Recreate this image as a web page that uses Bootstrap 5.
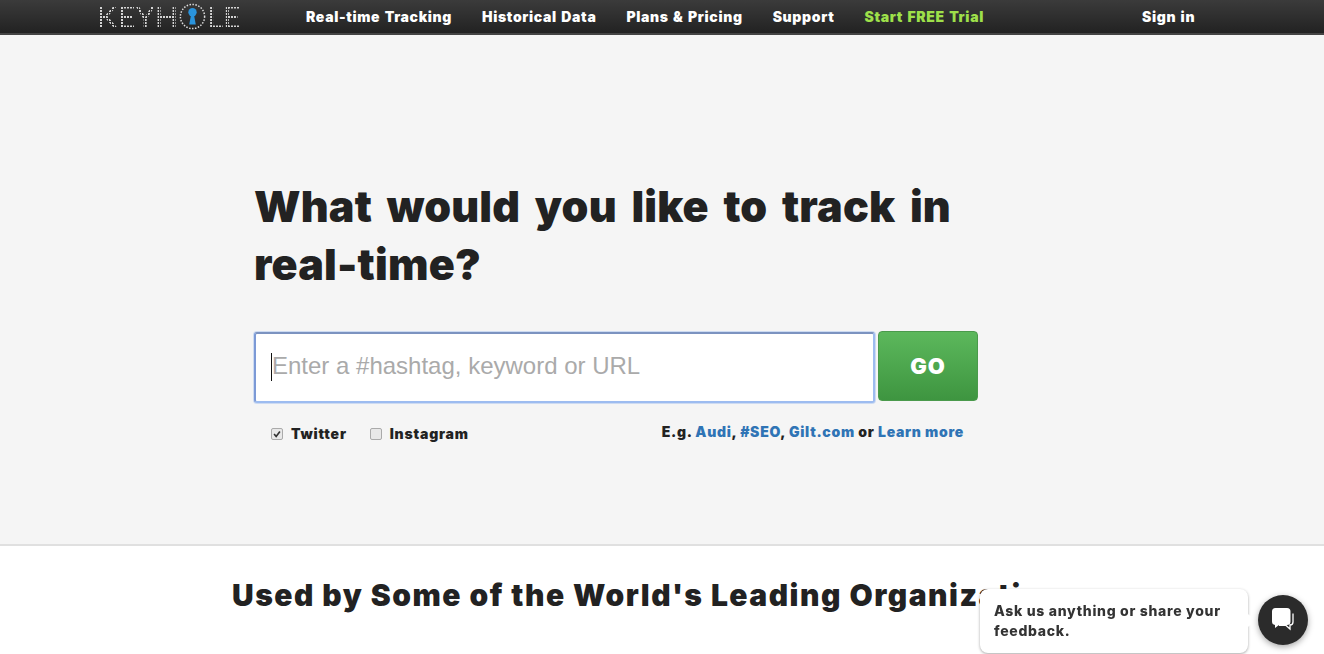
<!DOCTYPE html>
<html lang="en">
<head>
    <meta charset="UTF-8">
    <meta name="viewport" content="width=device-width, initial-scale=1.0">
    <title>Keyhole</title>
    <link href="https://cdn.jsdelivr.net/npm/bootstrap@5.3.0/dist/css/bootstrap.min.css" rel="stylesheet">
    <style>
        html, body { height: 100%; }
        body {
            font-family: Inter, "Liberation Sans", sans-serif;
            font-weight: 900;
            color: #222;
            background: #fff;
            overflow: hidden;
        }
        .top-bar {
            height: 35px;
            padding: 0 0 0 97px;
            background: linear-gradient(#3b3b3b, #222);
            border-bottom: 2px solid #444;
            flex-wrap: nowrap;
            justify-content: flex-start;
        }
        .logo-link {
            display: flex;
            align-items: center;
            justify-content: space-between;
            width: 144px;
            height: 33px;
            margin-right: 65px;
            padding: 0;
            color: #fff;
            font-size: 31px;
            font-family: Lato, sans-serif;
            font-weight: 400;
            line-height: 1;
        }
        .logo-text {
            color: transparent;
            background-image: radial-gradient(circle at 1px 1px, #d4d4d4 1.1px, transparent 1.4px);
            background-size: 3px 3px;
            -webkit-background-clip: text;
            background-clip: text;
        }
        .logo-o { width: 27px; height: 27px; flex: none; }
        .top-links { gap: 30px; flex-direction: row; }
        .top-links .nav-link {
            padding: 0;
            color: #fff;
            font-size: 14px;
            letter-spacing: .65px;
            word-spacing: 1px;
            line-height: 32px;
        }
        .top-links .nav-link.trial-link { color: #9ee04a; }
        .sign-link { margin-left: 128px; }
        .hero {
            height: 511px;
            background: #f5f5f5;
            border-bottom: 2px solid #e0e0e0;
            padding: 142px 0 0 254px;
        }
        .hero-box { width: 724px; }
        .hero-title {
            font-size: 43px;
            line-height: 58px;
            font-weight: 900;
            letter-spacing: .2px;
            word-spacing: 5.8px;
            margin: 0 0 38px;
            color: #222;
        }
        .search-row { gap: 3px; align-items: flex-start; }
        .search-wrap { width: 621px; height: 71px; margin-top: 1px; }
        .search-input {
            height: 71px;
            padding: 0 16px 4px;
            border: 2px solid #9dbcf0;
            border-top-color: #7c93c0;
            border-left-color: #7c9ad6;
            border-radius: 3px;
            box-shadow: 0 0 0 1px rgba(157,188,240,.45);
            font-family: "Liberation Sans", sans-serif;
            font-size: 24px;
            font-weight: 400;
        }
        .search-input::placeholder { color: #aaa; opacity: 1; }
        .fake-caret {
            position: absolute;
            left: 17px;
            top: 21px;
            width: 1px;
            height: 28px;
            background: #111;
        }
        .go-btn {
            width: 100px;
            height: 70px;
            padding: 0;
            font-size: 22px;
            font-weight: 900;
            letter-spacing: 1px;
            color: #fff;
            background: linear-gradient(#5cb85c, #3e9540);
            border: 1px solid #4a9a4c;
            border-radius: 4px;
        }
        .options-row { padding: 20px 14px 0 17px; align-items: center; }
        .source-check { margin: 0 23px 0 0; padding: 0; min-height: 0; display: flex; align-items: center; gap: 8px; }
        .source-check .form-check-input {
            float: none;
            width: 12px;
            height: 12px;
            margin: 0;
            background-color: #e8e8e8;
            border: 1px solid #aaa;
            border-radius: 2px;
        }
        .source-check .form-check-input:checked {
            background-color: #e8e8e8;
            border-color: #aaa;
            background-image: url("data:image/svg+xml,%3csvg xmlns='http://www.w3.org/2000/svg' viewBox='0 0 12 12'%3e%3cpath fill='none' stroke='%23333' stroke-width='2' d='M2.5 6l2.5 3 4.5-6'/%3e%3c/svg%3e");
        }
        .source-check .form-check-label { font-size: 14px; letter-spacing: .8px; color: #222; }
        .eg-line { font-size: 14px; letter-spacing: .7px; margin-top: -4px; color: #222; }
        .eg-line a { color: #2f74b5; text-decoration: none; }
        .clients-title {
            font-size: 30px;
            font-weight: 900;
            letter-spacing: 1.5px;
            line-height: 40px;
            margin: 29px 0 0 232px;
            white-space: nowrap;
            color: #222;
        }
        .chat-tip {
            position: fixed;
            left: 980px;
            top: 589px;
            width: 268px;
            height: 64px;
            padding: 12px 14px;
            background: #fff;
            border-radius: 8px;
            box-shadow: 0 1px 3px rgba(0,0,0,.35);
            font-size: 14px;
            letter-spacing: .7px;
            line-height: 20px;
            font-weight: 800;
            color: #333;
        }
        .chat-tip::after {
            content: "";
            position: absolute;
            right: -5px;
            top: 27px;
            width: 9px;
            height: 9px;
            background: #fff;
            transform: rotate(45deg);
        }
        .chat-btn {
            position: fixed;
            left: 1258px;
            top: 595px;
            width: 50px;
            height: 50px;
            border-radius: 50%;
            background: #2b2b2b;
            box-shadow: 0 2px 6px rgba(0,0,0,.35);
        }
    </style>
</head>
<body>
    <nav class="navbar top-bar">
        <a class="navbar-brand logo-link" href="#" aria-label="Keyhole">
            <span class="logo-text">KEYH</span>
            <svg class="logo-o" viewBox="0 0 29 29">
                <circle cx="14.5" cy="14.5" r="13" fill="none" stroke="#ddd" stroke-width="1.6" stroke-dasharray="1.6 1.6"/>
                <circle cx="14.5" cy="10" r="4.5" fill="#2a94dd"/>
                <path d="M13 12h3l2 11h-7z" fill="#2a94dd"/>
            </svg>
            <span class="logo-text">LE</span>
        </a>
        <ul class="navbar-nav top-links">
            <li class="nav-item"><a class="nav-link" href="#">Real-time Tracking</a></li>
            <li class="nav-item"><a class="nav-link" href="#">Historical Data</a></li>
            <li class="nav-item"><a class="nav-link" href="#">Plans &amp; Pricing</a></li>
            <li class="nav-item"><a class="nav-link" href="#">Support</a></li>
            <li class="nav-item"><a class="nav-link trial-link" href="#">Start FREE Trial</a></li>
            <li class="nav-item sign-link"><a class="nav-link" href="#">Sign in</a></li>
        </ul>
    </nav>

    <section class="hero">
        <div class="hero-box">
            <h1 class="hero-title">What would you like to track in real-time?</h1>
            <form>
                <div class="d-flex search-row">
                    <div class="search-wrap position-relative">
                        <input type="text" class="form-control search-input" placeholder="Enter a #hashtag, keyword or URL">
                        <span class="fake-caret"></span>
                    </div>
                    <button type="button" class="btn go-btn">GO</button>
                </div>
                <div class="d-flex options-row">
                    <div class="form-check source-check">
                        <input class="form-check-input" type="checkbox" id="srcTwitter" checked>
                        <label class="form-check-label" for="srcTwitter">Twitter</label>
                    </div>
                    <div class="form-check source-check">
                        <input class="form-check-input" type="checkbox" id="srcInstagram">
                        <label class="form-check-label" for="srcInstagram">Instagram</label>
                    </div>
                    <div class="eg-line ms-auto">E.g. <a href="#">Audi</a>, <a href="#">#SEO</a>, <a href="#">Gilt.com</a> or <a href="#">Learn more</a></div>
                </div>
            </form>
        </div>
    </section>

    <section>
        <h2 class="clients-title">Used by Some of the World's Leading Organizations</h2>
    </section>

    <div class="chat-tip">Ask us anything or share your feedback.</div>
    <div class="chat-btn">
        <svg viewBox="0 0 50 50" width="50" height="50">
            <path d="M17.5 13h11.500a3.500 3.500 0 0 1 3.500 3.500v10a3.500 3.500 0 0 1-3.500 3.500h-8l-4 3v-3h0a3.500 3.500 0 0 1-3-3.500v-10a3.500 3.500 0 0 1 3.500-3.500z" fill="#fff"/>
            <path d="M35 18.500v8.500a3 3 0 0 1-3 3v4l-4-3.600h-7" fill="none" stroke="#fff" stroke-width="1.300"/>
        </svg>
    </div>

    <script src="https://cdn.jsdelivr.net/npm/bootstrap@5.3.0/dist/js/bootstrap.bundle.min.js"></script>
</body>
</html>
